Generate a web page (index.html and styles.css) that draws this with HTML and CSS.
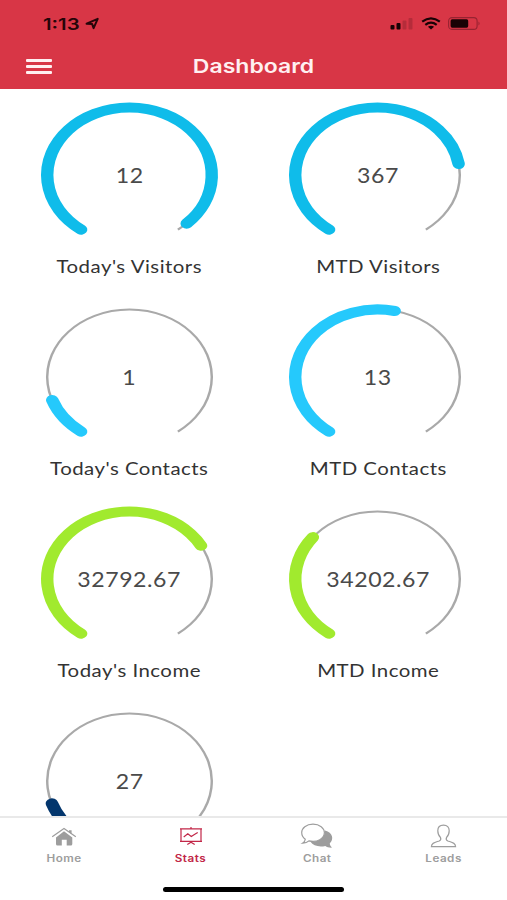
FILE: index.html
```html
<!DOCTYPE html>
<html lang="en">

<head>
  <meta charset="UTF-8">
  <meta name="viewport" content="width=device-width, initial-scale=1.0">
  <title>Dashboard</title>
  <link rel="stylesheet" href="styles.css">
</head>

<body>
  <div class="app">
    <header class="header">
      <div class="status-bar">
        <div class="status-left">
          <span class="time">1:13</span>
          <svg class="location" width="15" height="14" viewBox="0 0 15 14">
            <path d="M1.6 6.7L12.7 1.9L8.6 11.2L7.2 7.1Z" />
          </svg>
        </div>
        <div class="status-right">
          <svg width="24" height="13" viewBox="0 0 24 13">
            <rect x="0.5" y="8" width="4" height="4.5" rx="1" />
            <rect x="6.5" y="6" width="4" height="6.5" rx="1" />
            <rect class="faint" x="12.5" y="3.5" width="4" height="9" rx="1" />
            <rect class="faint" x="18.5" y="1" width="4" height="11.5" rx="1" />
          </svg>
          <svg class="wifi" width="20" height="13" viewBox="0 0 20 13">
            <path class="wifi-arc" d="M1.2 4.6Q10 -2 18.8 4.6" />
            <path class="wifi-arc" d="M4.3 7.8Q10 3.4 15.7 7.8" />
            <path d="M6.9 9.7Q10 7.6 13.1 9.7L10 12.5Z" />
          </svg>
          <svg class="battery" width="33" height="13" viewBox="0 0 33 13">
            <rect class="battery-case" x="0.6" y="0.6" width="28.5" height="11.8" rx="3.4" />
            <rect x="2.6" y="2.3" width="17.6" height="8.4" rx="1.6" />
            <path class="battery-tip" d="M30.5 4.5Q32.6 6.5 30.5 8.5Z" />
          </svg>
        </div>
      </div>
      <div class="nav-bar">
        <button type="button" class="menu-btn" aria-label="Menu">
          <span></span>
          <span></span>
          <span></span>
        </button>
        <h1 class="title">Dashboard</h1>
      </div>
    </header>

    <main class="stats" id="stats"></main>

    <footer class="tab-bar">
      <nav class="tabs">
        <a class="tab">
          <svg width="26" height="20" viewBox="0 0 26 20">
            <path class="solid" d="M13 4.3L21.3 10.6V17Q21.3 18.5 19.8 18.5H15.7V12.8H10.8V18.5H6.5Q5 18.5 5 17V10.6ZM18 3.2H20.6V7.2L18 5.2Z" />
            <path class="line" d="M1.2 9.8L13 1.6L24.8 9.8" />
          </svg>
          <span>Home</span>
        </a>
        <a class="tab active">
          <svg width="24" height="20" viewBox="0 0 24 20">
            <path class="line" d="M2 1.9H22V14.4H2ZM1 1.9H23M1 14.4H23M12 0V1.9M12 14.4V16M12 15.3L8.3 17.6M12 15.3L15.7 17.6" />
            <path class="line" d="M4.7 10L8.8 6.8L12.3 9.5L15 7.8L18.7 5.5" />
          </svg>
          <span>Stats</span>
        </a>
        <a class="tab">
          <svg class="chat-icon" width="34" height="26" viewBox="0 0 34 26">
            <path class="solid" d="M25 7.5C33 9.5 34 16.5 29.8 20.3C29.8 22 30.5 23.3 32 24.6C29 24.8 27 24 25.3 22.9C19 24.5 13 22.5 10.5 18.8C19 19 25 14.5 25 7.5Z" />
            <path class="bubble" d="M13 1.2C6.3 1.2 1.7 5 1.7 9.6C1.7 12.4 3.2 14.8 5.3 16.3C5.1 18 4.2 19.2 2.5 20.2C5.3 20.3 7.3 19.5 8.9 17.9C17.4 19.8 24.4 15.5 24.4 9.6C24.4 5 19.6 1.2 13 1.2Z" />
          </svg>
          <span>Chat</span>
        </a>
        <a class="tab">
          <svg class="person-icon" width="27" height="24" viewBox="0 0 27 24">
            <path class="line" d="M13.5 1.2C9.8 1.2 7.8 3.2 7.8 6.8C7.8 10.1 9 12.1 10.5 13.5C11.2 15.2 10.8 16.3 9.2 17C5.2 18.3 1.4 18.7 1.4 22.7H25.6C25.6 18.7 21.8 18.3 17.8 17C16.2 16.3 15.8 15.2 16.5 13.5C18 12.1 19.2 10.1 19.2 6.8C19.2 3.2 17.2 1.2 13.5 1.2Z" />
          </svg>
          <span>Leads</span>
        </a>
      </nav>
      <div class="home-indicator"></div>
    </footer>
  </div>

  <script>
    const gauges = [
      { label: "Today's Visitors", value: "12", percent: 97.2, color: "cyan" },
      { label: "MTD Visitors", value: "367", percent: 78, color: "cyan" },
      { label: "Today's Contacts", value: "1", percent: 11.8, color: "sky" },
      { label: "MTD Contacts", value: "13", percent: 54.2, color: "sky" },
      { label: "Today's Income", value: "32792.67", percent: 71, color: "lime" },
      { label: "MTD Income", value: "34202.67", percent: 32, color: "lime" },
      { value: "27", percent: 12, color: "navy" }
    ];

    // 288 degree arc, open at the bottom
    const arc = "M40.3 134.6A67.5 67.5 0 1 1 119.7 134.6";

    document.getElementById("stats").innerHTML = gauges.map((gauge) => `
      <section class="gauge">
        <div class="dial">
          <svg viewBox="0 0 160 160" preserveAspectRatio="none">
            <path class="track" d="${arc}" />
            <path class="value-arc ${gauge.color}" d="${arc}" pathLength="100" stroke-dasharray="${gauge.percent} 200" />
          </svg>
          <span class="value">${gauge.value}</span>
        </div>
        ${gauge.label ? `<h2 class="label">${gauge.label}</h2>` : ""}
      </section>
    `).join("");
  </script>
</body>

</html>
```
FILE: styles.css
```css
* {
  box-sizing: border-box;
}

body {
  margin: 0;
  background-color: #fff;
  font-family: Inter, "Liberation Sans", sans-serif;
}

.app {
  height: 900px;
  display: flex;
  flex-direction: column;
  overflow: hidden;
}

.header {
  flex: none;
  height: 89px;
  background-color: #d83646;
}

.status-bar {
  height: 46px;
  padding: 1px 26px 0 43px;
  display: flex;
  justify-content: space-between;
  align-items: center;
}

.status-left,
.status-right {
  display: flex;
  align-items: center;
}

.time {
  width: 42px;
  font-size: 16px;
  font-weight: 600;
  color: #260509;
  transform: scaleX(1.27);
  transform-origin: left;
}

.location {
  fill: none;
  stroke: #260509;
  stroke-width: 2;
  stroke-linejoin: round;
}

.status-right {
  fill: #180205;
}

.faint {
  fill: #b52c3a;
}

.wifi {
  margin-left: 7px;
}

.wifi-arc {
  fill: none;
  stroke: #180205;
  stroke-width: 2.2;
}

.battery {
  margin-left: 7px;
}

.battery-case {
  fill: none;
  stroke: #972331;
  stroke-width: 1.1;
}

.battery-tip {
  fill: #972331;
}

.nav-bar {
  height: 41px;
  padding: 0 26px;
  display: grid;
  grid-template-columns: 26px 1fr 26px;
  align-items: center;
}

.menu-btn {
  display: grid;
  gap: 3px;
  padding: 0;
  border: none;
  background: none;
}

.menu-btn span {
  height: 3px;
  border-radius: 1px;
  background-color: #fff0f1;
}

.title {
  margin: 0;
  font-size: 19px;
  font-weight: 600;
  text-align: center;
  color: #fff0f1;
  transform: scaleX(1.21);
}

.stats {
  flex: 1;
  min-height: 0;
  overflow: hidden;
  padding: 6px 5px 0;
  display: grid;
  grid-template-columns: 1fr 1fr;
  grid-auto-rows: 202px;
  align-content: start;
  font-family: Lato, "Liberation Sans", sans-serif;
}

.gauge {
  text-align: center;
}

.dial {
  height: 160px;
  display: grid;
  place-items: center;
}

.dial svg,
.value {
  grid-area: 1 / 1;
}

.dial svg {
  width: 195px;
  height: 160px;
  fill: none;
}

.track {
  stroke: #a9a9a9;
  stroke-width: 2;
}

.value-arc {
  stroke-width: 10.2;
  stroke-linecap: round;
}

.cyan {
  stroke: #0fbcea;
}

.sky {
  stroke: #25c9fc;
}

.lime {
  stroke: #a1ea2e;
}

.navy {
  stroke: #03366d;
}

.value {
  font-size: 21px;
  line-height: 24px;
  letter-spacing: 0.5px;
  color: #4a4a4a;
  transform: scaleX(1.1);
}

.label {
  margin: 0;
  font-size: 17px;
  font-weight: 400;
  line-height: 24px;
  letter-spacing: 0.4px;
  color: #333;
  transform: scaleX(1.2);
}

.tab-bar {
  flex: none;
  height: 84px;
  border-top: 2px solid #e9e9e9;
  background-color: #fff;
}

.tabs {
  height: 69px;
  padding-left: 1px;
  display: grid;
  grid-template-columns: repeat(4, 1fr);
}

.tab {
  display: flex;
  flex-direction: column;
  align-items: center;
  padding-top: 9px;
  color: #9d9d9d;
}

.tab svg {
  height: 20px;
  overflow: visible;
}

.tab .chat-icon,
.tab .person-icon {
  height: 26px;
  margin: -4px 0 -2px;
}

.tab span {
  margin-top: 4px;
  font-size: 10px;
  font-weight: 600;
  line-height: 14px;
  letter-spacing: 0.4px;
  transform: scaleX(1.17);
}

.tab.active {
  color: #c22748;
}

.solid {
  fill: currentColor;
}

.line {
  fill: none;
  stroke: currentColor;
  stroke-width: 1.2;
}

.bubble {
  fill: #fff;
  stroke: currentColor;
  stroke-width: 1.2;
}

.home-indicator {
  width: 181px;
  height: 5px;
  margin: 0 auto;
  border-radius: 3px;
  background-color: #000;
}
```
